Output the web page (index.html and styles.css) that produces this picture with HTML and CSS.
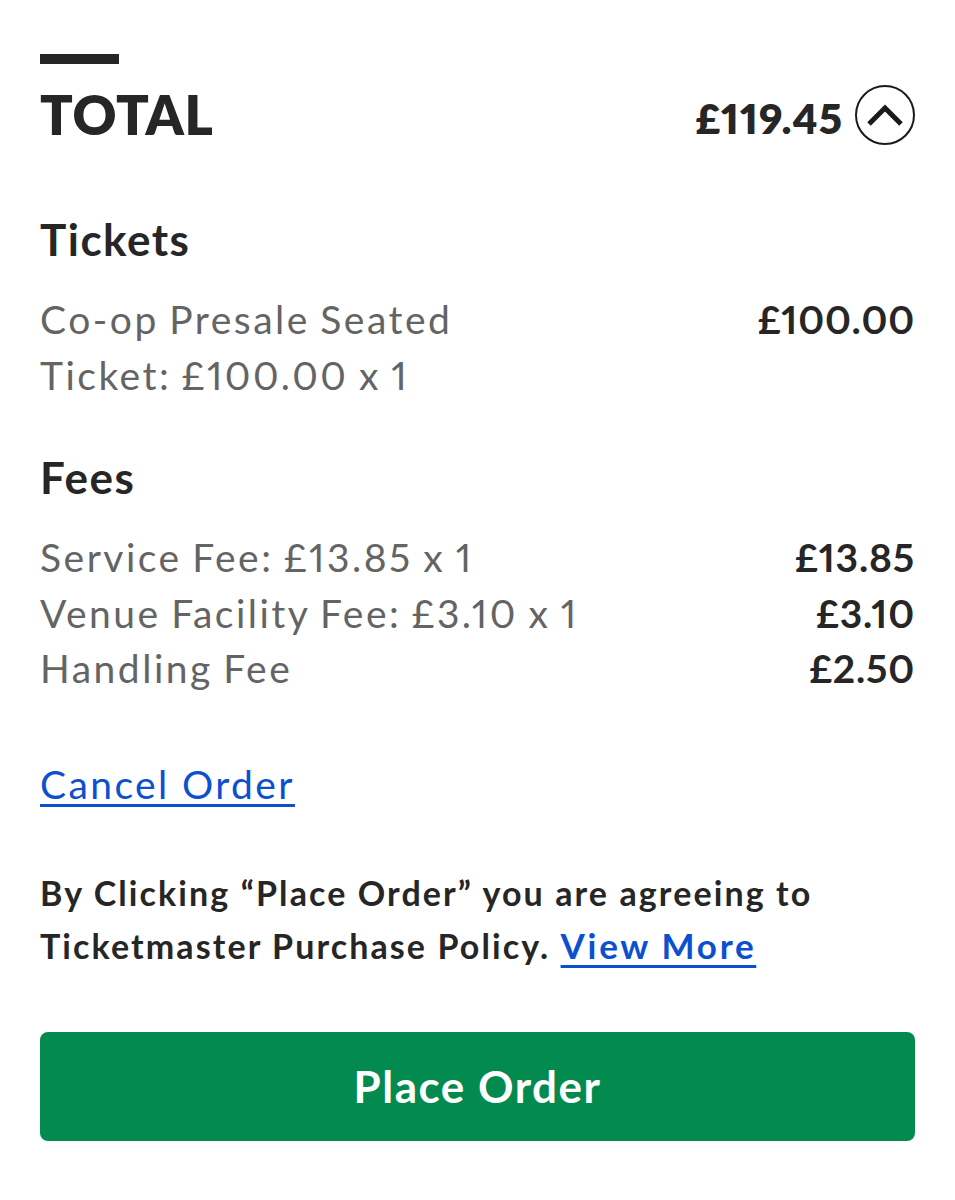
FILE: index.html
```html
<!DOCTYPE html>
<html>
<head>
<meta charset="utf-8">
<link rel="stylesheet" href="styles.css">
</head>
<body>
<main class="summary">
  <div class="bar"></div>
  <div class="total-row">
    <h1 class="total-label">TOTAL</h1>
    <div class="total-right">
      <span class="total-price">£119.45</span>
      <button class="toggle" aria-label="Collapse">
        <svg width="60" height="60" viewBox="0 0 60 60">
          <circle cx="30" cy="30" r="29" fill="none" stroke="#1a1a1a" stroke-width="2"/>
          <path d="M14 39 L30 23 L46 39" fill="none" stroke="#1a1a1a" stroke-width="5"/>
        </svg>
      </button>
    </div>
  </div>

  <section class="group">
    <h2 class="group-title">Tickets</h2>
    <div class="line">
      <div class="line-label">Co-op Presale Seated<br>Ticket: £100.00 x 1</div>
      <div class="line-price">£100.00</div>
    </div>
  </section>

  <section class="group fees">
    <h2 class="group-title">Fees</h2>
    <div class="line">
      <div class="line-label">Service Fee: £13.85 x 1</div>
      <div class="line-price">£13.85</div>
    </div>
    <div class="line">
      <div class="line-label">Venue Facility Fee: £3.10 x 1</div>
      <div class="line-price">£3.10</div>
    </div>
    <div class="line">
      <div class="line-label">Handling Fee</div>
      <div class="line-price">£2.50</div>
    </div>
  </section>

  <a class="cancel" href="#">Cancel Order</a>

  <p class="policy">By Clicking “Place Order” you are agreeing to Ticketmaster Purchase Policy. <a href="#" class="view-more">View More</a></p>

  <button class="place-order">Place Order</button>
</main>
</body>
</html>
```

FILE: styles.css
```css
* { box-sizing: border-box; }
html, body { margin: 0; padding: 0; background: #fff; }
body {
  font-family: Lato, "Noto Sans", sans-serif;
  color: #262626;
  width: 955px;
  font-variant-numeric: proportional-nums;
}
.summary {
  padding: 54px 40px 0 40px;
  display: flex;
  flex-direction: column;
}
.bar {
  width: 79px;
  height: 10px;
  background: #262626;
}
.total-row {
  display: flex;
  justify-content: space-between;
  align-items: flex-start;
  margin-top: 21px;
  height: 60px;
}
.total-label {
  margin: 0;
  font-size: 54px;
  font-weight: 800;
  letter-spacing: 0.5px;
  line-height: 60px;
}
.total-right {
  display: flex;
  align-items: flex-start;
  gap: 12px;
}
.total-price {
  font-size: 42px;
  font-weight: 800;
  line-height: 60px;
  margin-top: 3px;
  letter-spacing: 1px;
}
.toggle {
  border: 0;
  background: none;
  padding: 0;
  width: 60px;
  height: 60px;
  display: block;
}
.toggle svg { display: block; }
.group { margin-top: 66px; }
.group-title {
  margin: 0 0 25px 0;
  font-size: 44px;
  font-weight: 700;
  letter-spacing: 1.5px;
  line-height: 56px;
}
.line {
  display: flex;
  justify-content: space-between;
  align-items: flex-start;
  font-size: 39px;
  line-height: 55.5px;
  letter-spacing: 2.5px;
  word-spacing: -2px;
}
.line-label { color: #646464; font-weight: 400; }
.line-price { font-weight: 700; color: #262626; letter-spacing: 0.8px; }
.fees { margin-top: 46px; }
.cancel {
  margin-top: 60px;
  align-self: flex-start;
  color: #0b50cf;
  font-size: 39px;
  line-height: 55px;
  letter-spacing: 2.4px;
  text-decoration: underline;
  text-decoration-thickness: 3px;
  text-underline-offset: 5px;
}
.policy {
  margin: 55px 0 0 0;
  font-size: 34px;
  font-weight: 700;
  line-height: 52px;
  letter-spacing: 2.1px;
  color: #262626;
}
.view-more {
  color: #0b50cf;
  font-size: 35px;
  letter-spacing: 2.7px;
  text-decoration: underline;
  text-decoration-thickness: 3px;
  text-underline-offset: 6px;
}
.place-order {
  margin-top: 60px;
  height: 109px;
  width: 100%;
  border: 0;
  border-radius: 8px;
  background: #038a4f;
  color: #fff;
  font-family: Lato, "Noto Sans", sans-serif;
  font-size: 44px;
  font-weight: 700;
  letter-spacing: 1.5px;
}
```
